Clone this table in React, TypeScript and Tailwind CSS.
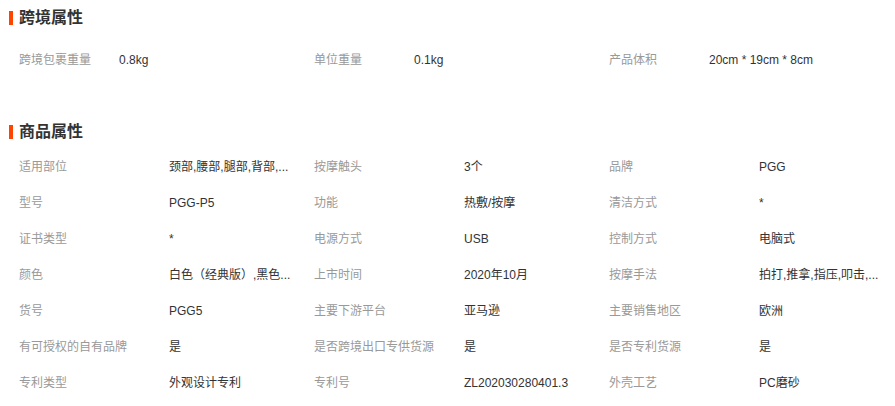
import React from "react";

const font = { fontFamily: '"Liberation Sans", "Noto Sans CJK SC", sans-serif' };

const cross: [string, string][] = [
  ["跨境包裹重量", "0.8kg"],
  ["单位重量", "0.1kg"],
  ["产品体积", "20cm * 19cm * 8cm"],
];

const attrs: [string, string][] = [
  ["适用部位", "颈部,腰部,腿部,背部,..."],
  ["按摩触头", "3个"],
  ["品牌", "PGG"],
  ["型号", "PGG-P5"],
  ["功能", "热敷/按摩"],
  ["清洁方式", "*"],
  ["证书类型", "*"],
  ["电源方式", "USB"],
  ["控制方式", "电脑式"],
  ["颜色", "白色（经典版）,黑色..."],
  ["上市时间", "2020年10月"],
  ["按摩手法", "拍打,推拿,指压,叩击,..."],
  ["货号", "PGG5"],
  ["主要下游平台", "亚马逊"],
  ["主要销售地区", "欧洲"],
  ["有可授权的自有品牌", "是"],
  ["是否跨境出口专供货源", "是"],
  ["是否专利货源", "是"],
  ["专利类型", "外观设计专利"],
  ["专利号", "ZL202030280401.3"],
  ["外壳工艺", "PC磨砂"],
];

function Title({ text }: { text: string }) {
  return (
    <div className="flex items-center h-[35px] pl-[9px]">
      <div className="w-[4px] h-[14px] bg-[#ff4400] mr-[6px]" />
      <div className="text-[16px] font-bold text-[#333]">{text}</div>
    </div>
  );
}

export default function App() {
  return (
    <div className="w-[895px] h-[406px] bg-white overflow-hidden" style={font}>
      <Title text="跨境属性" />
      <div className="grid grid-cols-[295px_295px_295px] pl-[19px] mt-[7px]">
        {cross.map(([k, v]) => (
          <div key={k} className="flex items-center h-[36px] text-[12px]">
            <div className="w-[100px] text-[#999]">{k}</div>
            <div className="text-[#333] whitespace-nowrap">{v}</div>
          </div>
        ))}
      </div>
      <div className="h-[36px]" />
      <Title text="商品属性" />
      <div className="grid grid-cols-[295px_295px_295px] pl-[19px]">
        {attrs.map(([k, v]) => (
          <div key={k} className="flex items-center h-[36px] text-[12px]">
            <div className="w-[150px] shrink-0 text-[#999] whitespace-nowrap">{k}</div>
            <div className="text-[#333] whitespace-nowrap">{v}</div>
          </div>
        ))}
      </div>
    </div>
  );
}
